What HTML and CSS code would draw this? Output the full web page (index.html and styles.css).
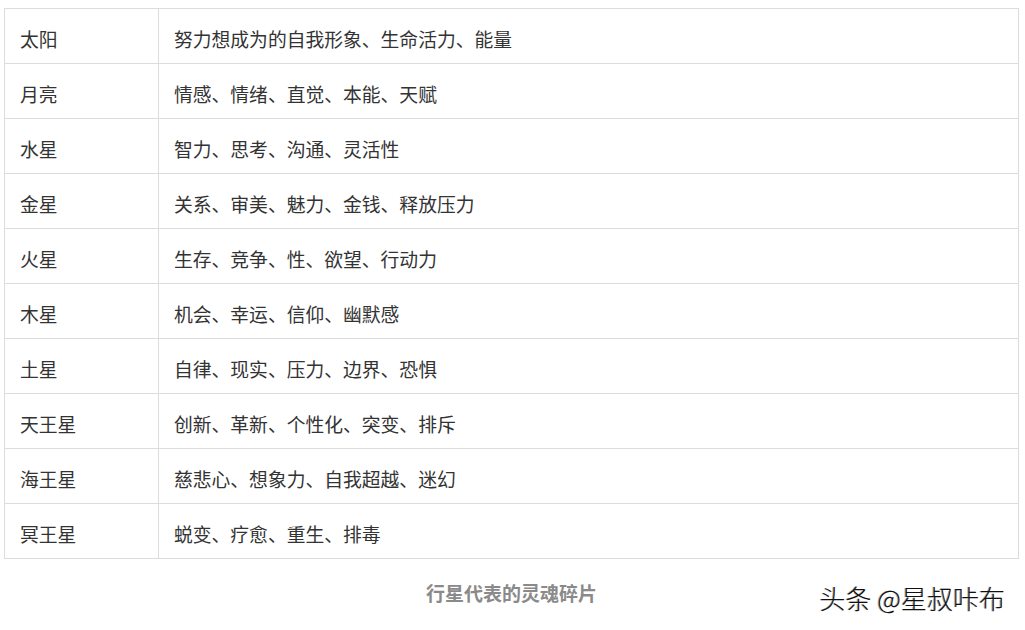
FILE: index.html
```html
<!DOCTYPE html>
<html lang="zh-CN">

<head>
  <meta charset="UTF-8" />
  <title>行星代表的灵魂碎片</title>
  <link rel="stylesheet" href="styles.css">
</head>

<body>
  <div class="figure">
    <table class="planet-table">
      <tbody>
        <tr><td class="name">太阳</td><td>努力想成为的自我形象、生命活力、能量</td></tr>
        <tr><td class="name">月亮</td><td>情感、情绪、直觉、本能、天赋</td></tr>
        <tr><td class="name">水星</td><td>智力、思考、沟通、灵活性</td></tr>
        <tr><td class="name">金星</td><td>关系、审美、魅力、金钱、释放压力</td></tr>
        <tr><td class="name">火星</td><td>生存、竞争、性、欲望、行动力</td></tr>
        <tr><td class="name">木星</td><td>机会、幸运、信仰、幽默感</td></tr>
        <tr><td class="name">土星</td><td>自律、现实、压力、边界、恐惧</td></tr>
        <tr><td class="name">天王星</td><td>创新、革新、个性化、突变、排斥</td></tr>
        <tr><td class="name">海王星</td><td>慈悲心、想象力、自我超越、迷幻</td></tr>
        <tr><td class="name">冥王星</td><td>蜕变、疗愈、重生、排毒</td></tr>
      </tbody>
    </table>

    <div class="caption-row">
      <p class="caption">行星代表的灵魂碎片</p>
      <span class="watermark">头条 @星叔咔布</span>
    </div>
  </div>
</body>

</html>
```

FILE: styles.css
```css
/* --- BASE --- */
* {
  margin: 0;
  padding: 0;
  box-sizing: border-box;
}

body {
  background: #fff;
  font-family: "Noto Sans CJK SC", "Liberation Sans", sans-serif;
  color: #333;
}

.figure {
  padding: 8px 6px 0 4px;
}

/* --- TABELA --- */
.planet-table {
  width: 1015px;
  border-collapse: collapse;
  font-size: 18.8px;
}

.planet-table td {
  height: 55px;
  border: 1px solid #dcdcdc;
  padding: 6px 15px 0;
  vertical-align: middle;
  color: #333;
  line-height: 1.2;
}

.planet-table td.name {
  width: 154px;
}

/* --- LEGENDA --- */
.caption-row {
  position: relative;
  height: 72px;
  display: flex;
  justify-content: center;
  align-items: center;
}

.caption {
  font-size: 19px;
  font-weight: bold;
  color: #8a8a8a;
  margin-top: -5px;
}

.watermark {
  position: absolute;
  right: 14px;
  top: 20px;
  font-size: 26px;
  font-weight: 300;
  color: #111;
  text-shadow: 1px 1px 0 #fff, -1px 0 0 #aaa;
}
```
